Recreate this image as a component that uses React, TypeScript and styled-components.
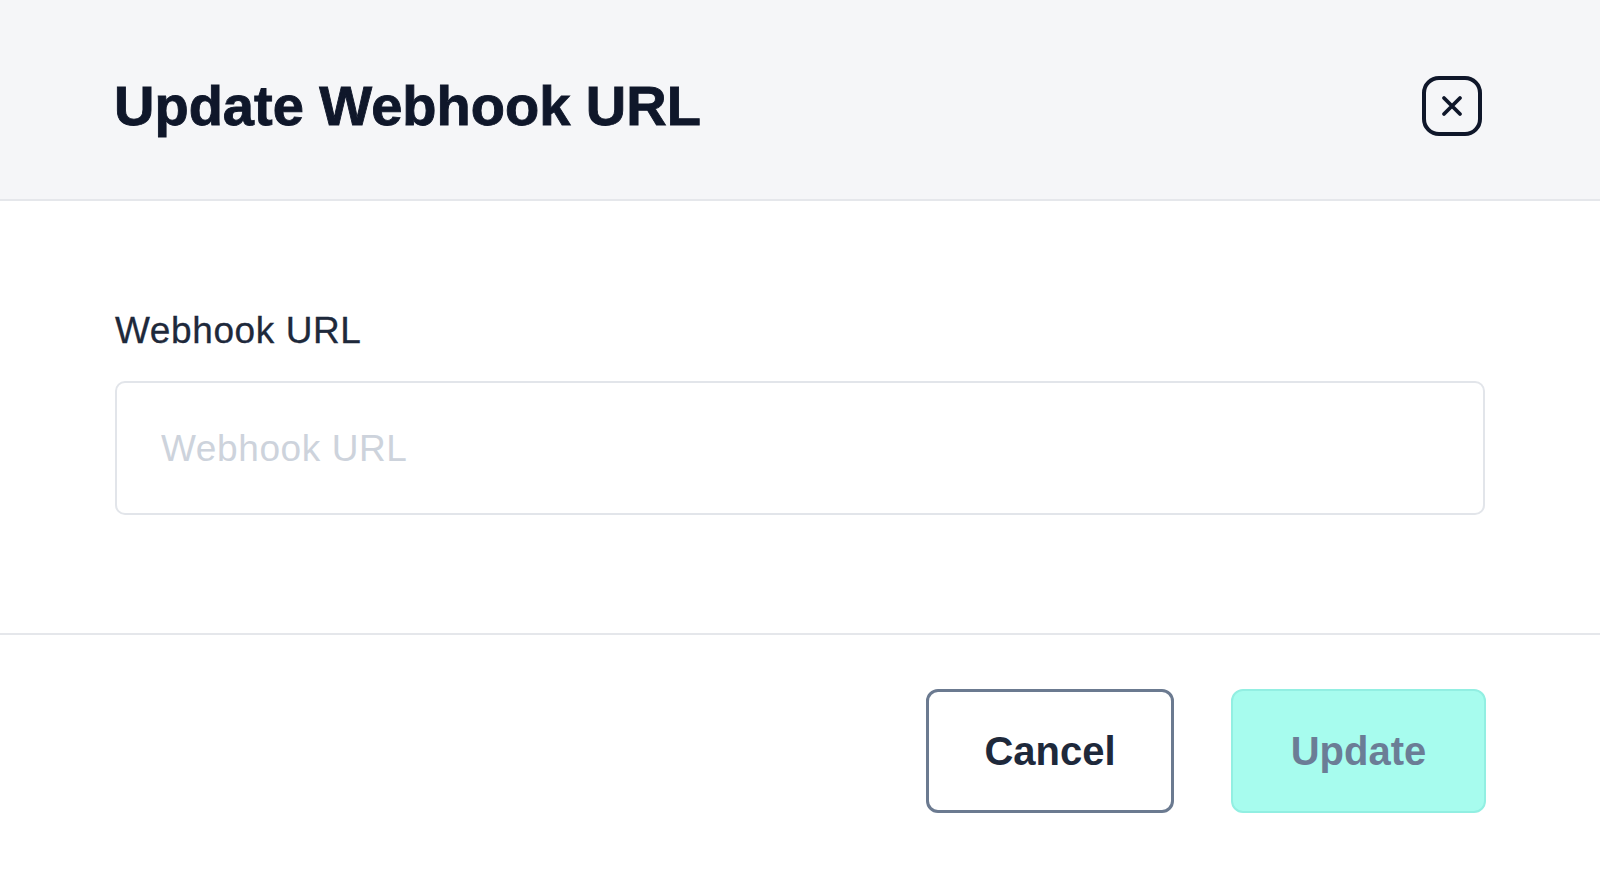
import React from "react";
import styled, { createGlobalStyle } from "styled-components";

const GlobalStyle = createGlobalStyle`
  html, body {
    margin: 0;
    padding: 0;
    background: #ffffff;
  }
  body {
    font-family: "Liberation Sans", Arial, sans-serif;
  }
  * { box-sizing: border-box; }
`;

const Dialog = styled.div`
  width: 1600px;
  height: 871px;
  display: flex;
  flex-direction: column;
  background: #ffffff;
  overflow: hidden;
`;

const Header = styled.header`
  height: 201px;
  padding: 12px 118px 0 114px;
  display: flex;
  align-items: center;
  justify-content: space-between;
  background: #f5f6f8;
  border-bottom: 2px solid #e5e7eb;
`;

const Title = styled.h1`
  margin: 0;
  font-family: "Liberation Sans", Arial, sans-serif;
  font-weight: 700;
  font-size: 56px;
  line-height: 1;
  letter-spacing: 0px;
  -webkit-text-stroke: 0.9px #0f172a;
  color: #0f172a;
`;

const CloseButton = styled.button`
  width: 60px;
  height: 60px;
  padding: 0;
  display: flex;
  align-items: center;
  justify-content: center;
  background: transparent;
  border: 4px solid #0f172a;
  border-radius: 17px;
  cursor: pointer;
  color: #0f172a;
`;

const Body = styled.section`
  padding: 111px 115px 118px 115px;
  display: flex;
  flex-direction: column;
  gap: 32px;
  border-bottom: 2px solid #e5e7eb;
`;

const Label = styled.label`
  font-family: "Liberation Sans", Arial, sans-serif;
  font-size: 37px;
  line-height: 37px;
  letter-spacing: 0.6px;
  -webkit-text-stroke: 0.3px #1e293b;
  color: #1e293b;
`;

const Input = styled.input`
  width: 100%;
  height: 134px;
  padding: 2px 44px 0;
  border: 2px solid #e2e5ea;
  border-radius: 10px;
  background: #ffffff;
  font-family: "Liberation Sans", Arial, sans-serif;
  font-size: 37px;
  letter-spacing: 0.6px;
  color: #1e293b;
  outline: none;
  &::placeholder {
    color: #cdd3dc;
  }
`;

const Footer = styled.footer`
  flex: 1;
  padding: 54px 114px 0 0;
  display: flex;
  justify-content: flex-end;
  align-items: flex-start;
  gap: 57px;
`;

const Button = styled.button<{ $primary?: boolean; $width: number }>`
  width: ${(p) => p.$width}px;
  height: 124px;
  display: flex;
  align-items: center;
  justify-content: center;
  border-radius: 12px;
  font-family: "Liberation Sans", Arial, sans-serif;
  font-weight: 700;
  font-size: 40px;
  cursor: pointer;
  background: ${(p) => (p.$primary ? "#a7fcee" : "#ffffff")};
  border: ${(p) => (p.$primary ? "2px solid #92efe2" : "3px solid #6b7a90")};
  color: ${(p) => (p.$primary ? "#6b7d96" : "#1e293b")};
`;

export default function App() {
  return (
    <>
      <GlobalStyle />
      <Dialog>
        <Header>
          <Title>Update Webhook URL</Title>
          <CloseButton aria-label="Close">
            <svg width="24" height="24" viewBox="0 0 24 24" fill="none">
              <path
                d="M4 4 L20 20 M20 4 L4 20"
                stroke="#0f172a"
                strokeWidth="3.8"
                strokeLinecap="round"
              />
            </svg>
          </CloseButton>
        </Header>
        <Body>
          <Label htmlFor="webhook-url">Webhook URL</Label>
          <Input id="webhook-url" placeholder="Webhook URL" />
        </Body>
        <Footer>
          <Button $width={248}>Cancel</Button>
          <Button $primary $width={255}>Update</Button>
        </Footer>
      </Dialog>
    </>
  );
}
